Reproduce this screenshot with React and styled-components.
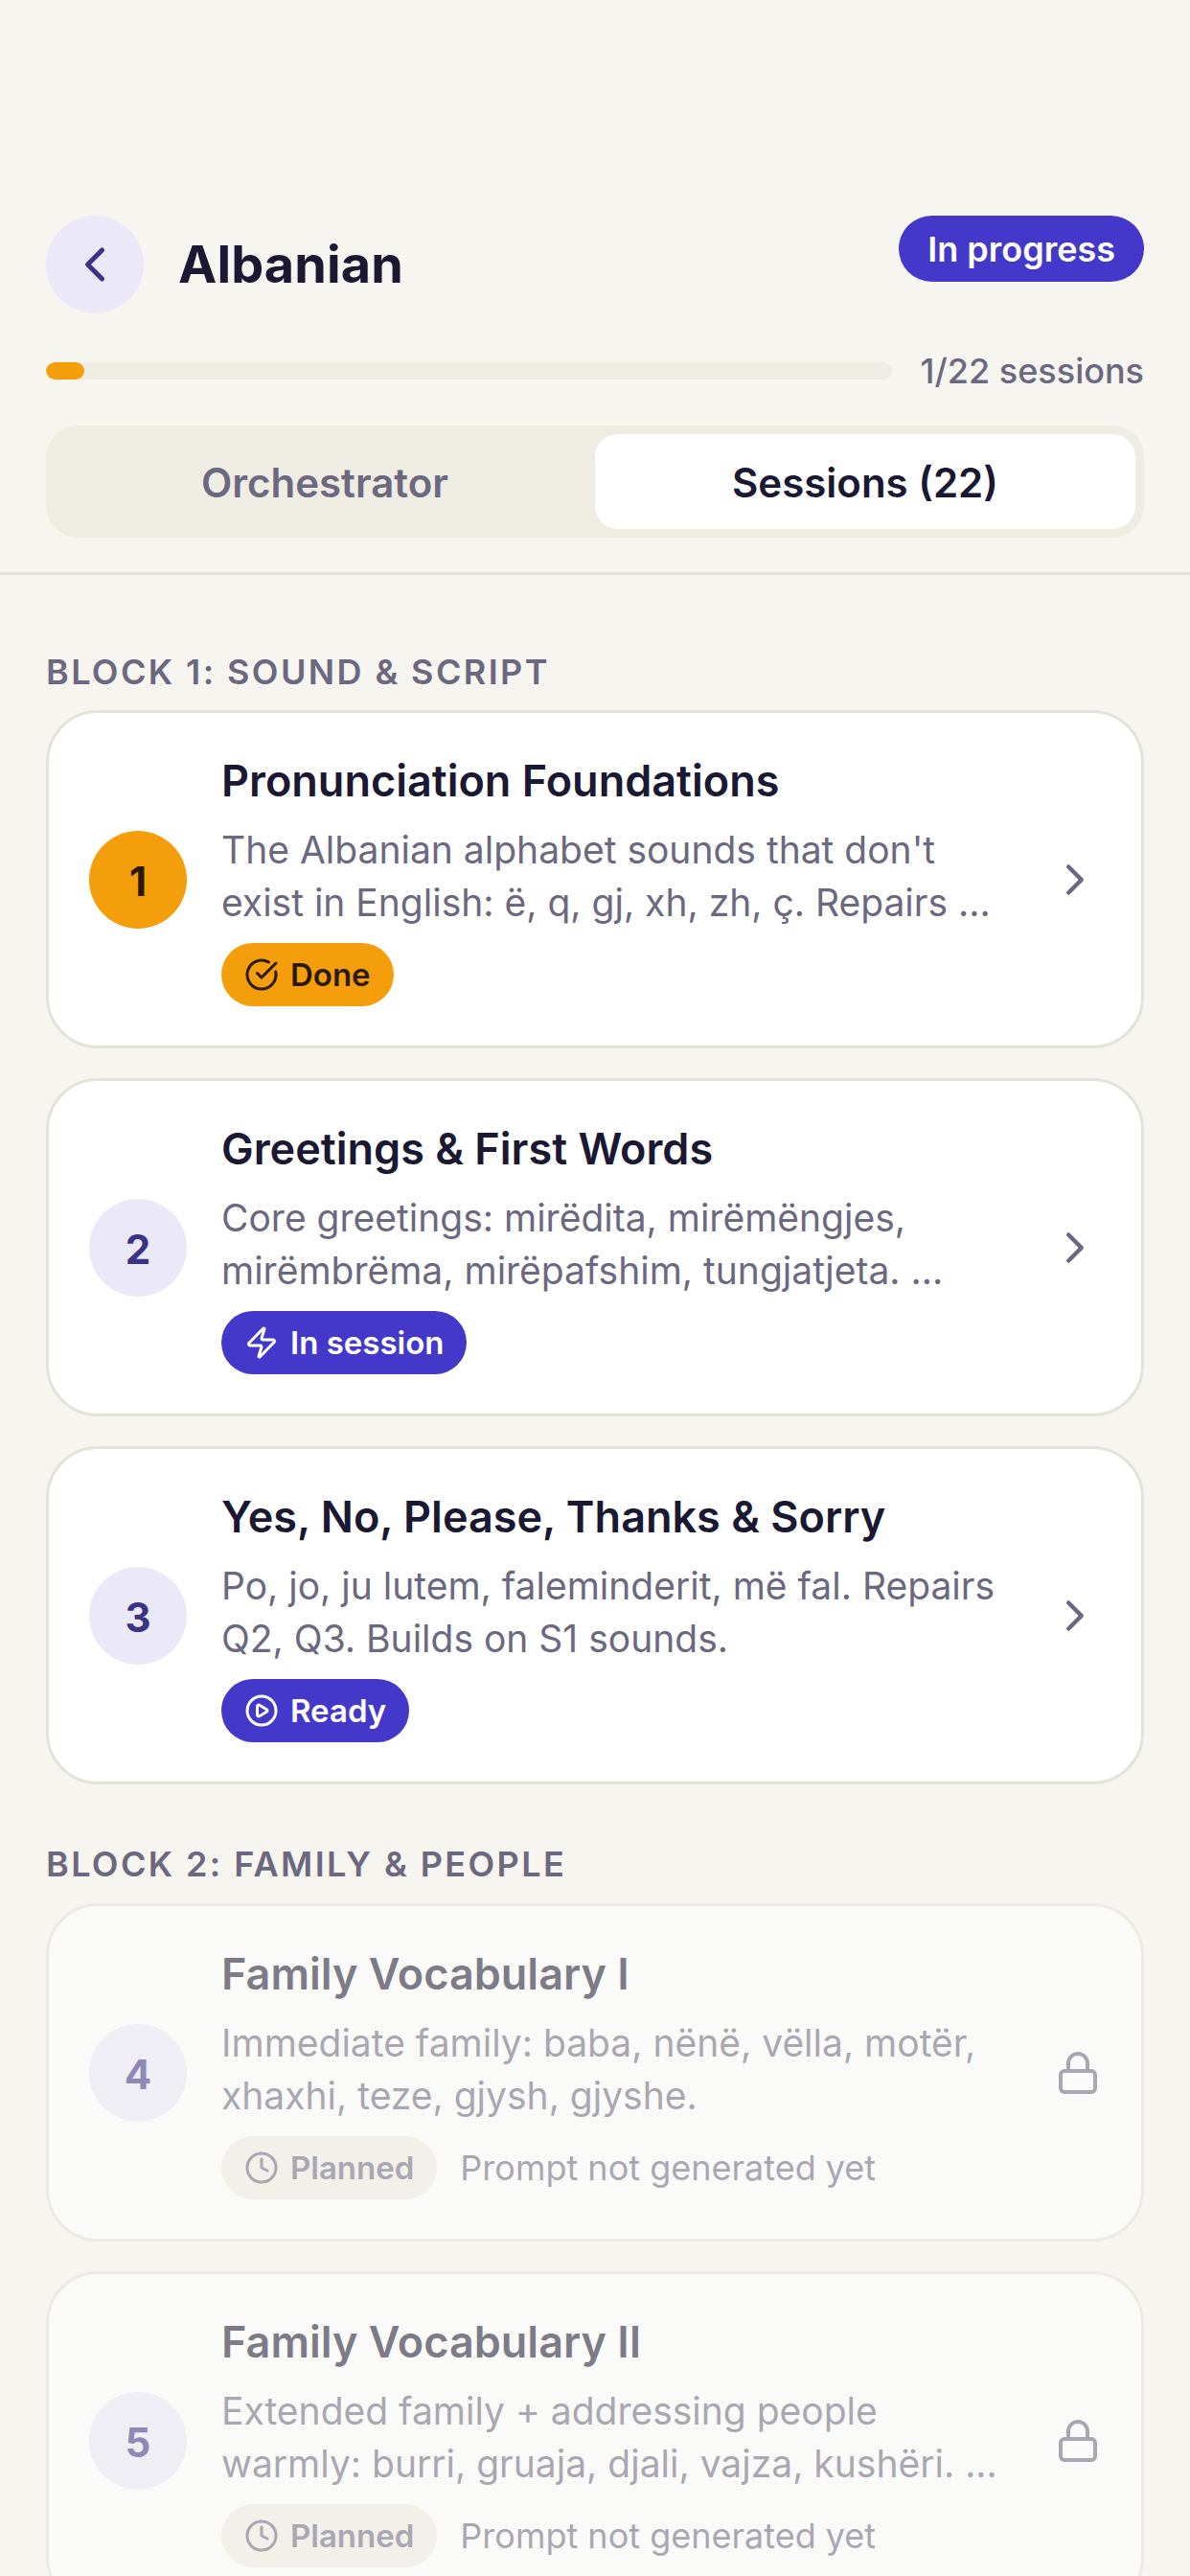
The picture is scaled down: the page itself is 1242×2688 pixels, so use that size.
import React from "react";
import styled, { createGlobalStyle } from "styled-components";
import { ChevronLeft, ChevronRight, CircleCheckBig, Zap, CirclePlay, Clock, Lock } from "lucide-react";

const Global = createGlobalStyle`
  html, body { margin: 0; padding: 0; background: #f6f5f0; }
  body { font-family: Inter, "Liberation Sans", sans-serif; -webkit-font-smoothing: antialiased; }
  * { box-sizing: border-box; }
`;

const Page = styled.div`
  width: 1242px;
  height: 2688px;
  overflow: hidden;
  background: #f6f5f0;
`;

const Header = styled.header`
  padding: 225px 48px 0;
  border-bottom: 3px solid #e5e2da;
  height: 600px;
`;

const TopRow = styled.div`
  display: flex;
  align-items: flex-start;
  justify-content: space-between;
`;

const TitleGroup = styled.div`
  display: flex;
  align-items: center;
  gap: 36px;
`;

const BackButton = styled.button`
  width: 102px;
  height: 102px;
  border: 0;
  padding: 0;
  border-radius: 50%;
  background: #ebe9f8;
  color: #3b3486;
  display: flex;
  align-items: center;
  justify-content: center;
`;

const Title = styled.h1`
  margin: 0;
  font-size: 54px;
  line-height: 1.2;
  font-weight: 700;
  letter-spacing: 0.1px;
  color: #1a1833;
`;

const StateBadge = styled.span`
  height: 69px;
  display: flex;
  align-items: center;
  padding: 0 30px;
  border-radius: 35px;
  background: #4338ca;
  color: #fff;
  font-size: 36px;
  font-weight: 600;
`;

const ProgressRow = styled.div`
  display: flex;
  align-items: center;
  gap: 30px;
  margin-top: 38px;
`;

const Track = styled.div`
  flex: 1;
  height: 18px;
  border-radius: 9px;
  background: #efece4;
  overflow: hidden;
`;

const Fill = styled.div`
  height: 100%;
  border-radius: 9px;
  background: #f59e0b;
`;

const ProgressText = styled.span`
  font-size: 36px;
  line-height: 44px;
  font-weight: 500;
  color: #6b6880;
`;

const Tabs = styled.div`
  display: grid;
  grid-template-columns: 1fr 1fr;
  height: 117px;
  margin-top: 35px;
  padding: 9px;
  border-radius: 33px;
  background: #efece4;
`;

const Tab = styled.div`
  display: flex;
  align-items: center;
  justify-content: center;
  padding-top: 2px;
  border-radius: 24px;
  font-size: 42px;
  font-weight: 600;
  background: ${(p) => (p.$active ? "#fff" : "transparent")};
  color: ${(p) => (p.$active ? "#1a1833" : "#6b6880")};
`;

const Content = styled.main`
  padding: 0 48px;
`;

const BlockLabel = styled.h2`
  margin: 0;
  padding-top: ${(p) => (p.$first ? "81px" : "63px")};
  height: ${(p) => (p.$first ? "141px" : "124px")};
  font-size: 36px;
  line-height: 40px;
  font-weight: 600;
  letter-spacing: 2.4px;
  color: #6b6880;
  text-transform: uppercase;
`;

const Cards = styled.div`
  display: flex;
  flex-direction: column;
  gap: 31px;
`;

const Card = styled.article`
  height: 353px;
  display: flex;
  align-items: center;
  gap: 36px;
  padding: 0 42px;
  border: 3px solid #e5e2da;
  border-radius: 54px;
  background: #fff;
  opacity: ${(p) => (p.$locked ? 0.55 : 1)};
`;

const Num = styled.div`
  flex: none;
  width: 102px;
  height: 102px;
  padding-top: 3px;
  border-radius: 50%;
  display: flex;
  align-items: center;
  justify-content: center;
  font-size: 42px;
  font-weight: 700;
  background: ${(p) => (p.$done ? "#f59e0b" : "#ebe9f8")};
  color: ${(p) => (p.$done ? "#2c1a00" : "#3b3486")};
`;

const Body = styled.div`
  flex: 1;
  min-width: 0;
  padding-top: 3px;
`;

const CardTitle = styled.h3`
  margin: 0;
  font-size: 45px;
  line-height: 54px;
  font-weight: 600;
  color: #1a1833;
`;

const Desc = styled.p`
  margin: 18px 0 0;
  font-size: 39px;
  line-height: 54.6px;
  color: #6b6880;
`;

const MetaRow = styled.div`
  display: flex;
  align-items: center;
  gap: 24px;
  margin-top: 15px;
`;

const Pill = styled.span`
  height: 66px;
  display: inline-flex;
  align-items: center;
  gap: 12px;
  padding: 0 24px;
  border-radius: 33px;
  font-size: 33px;
  font-weight: 600;
  background: ${(p) => ({ done: "#f59e0b", active: "#4338ca", planned: "#efece4" }[p.$kind])};
  color: ${(p) => ({ done: "#2c1a00", active: "#fff", planned: "#6b6880" }[p.$kind])};
`;

const Note = styled.span`
  font-size: 36px;
  color: #6b6880;
`;

const Trail = styled.div`
  flex: none;
  width: 54px;
  display: flex;
  justify-content: flex-end;
  color: #6b6880;
`;

const pillIcon = { size: 36, strokeWidth: 2 };

const STATUS = {
  done: { kind: "done", label: "Done", icon: <CircleCheckBig {...pillIcon} /> },
  session: { kind: "active", label: "In session", icon: <Zap {...pillIcon} /> },
  ready: { kind: "active", label: "Ready", icon: <CirclePlay {...pillIcon} /> },
  planned: { kind: "planned", label: "Planned", icon: <Clock {...pillIcon} /> },
};

const SessionCard = ({ n, title, desc, status }) => {
  const s = STATUS[status];
  const locked = status === "planned";
  return (
    <Card $locked={locked}>
      <Num $done={status === "done"}>{n}</Num>
      <Body>
        <CardTitle>{title}</CardTitle>
        <Desc>{desc}</Desc>
        <MetaRow>
          <Pill $kind={s.kind}>
            {s.icon}
            {s.label}
          </Pill>
          {locked && <Note>Prompt not generated yet</Note>}
        </MetaRow>
      </Body>
      <Trail>{locked ? <Lock size={48} strokeWidth={2} /> : <ChevronRight size={54} strokeWidth={2} />}</Trail>
    </Card>
  );
};

export default function App() {
  return (
    <Page>
      <Global />
      <Header>
        <TopRow>
          <TitleGroup>
            <BackButton aria-label="Back">
              <ChevronLeft size={60} strokeWidth={2} />
            </BackButton>
            <Title>Albanian</Title>
          </TitleGroup>
          <StateBadge>In progress</StateBadge>
        </TopRow>
        <ProgressRow>
          <Track>
            <Fill style={{ width: `${(1 / 22) * 100}%` }} />
          </Track>
          <ProgressText>1/22 sessions</ProgressText>
        </ProgressRow>
        <Tabs>
          <Tab>Orchestrator</Tab>
          <Tab $active>Sessions (22)</Tab>
        </Tabs>
      </Header>
      <Content>
        <BlockLabel $first>Block 1: Sound &amp; Script</BlockLabel>
        <Cards>
          <SessionCard n={1} status="done" title="Pronunciation Foundations" desc="The Albanian alphabet sounds that don't exist in English: ë, q, gj, xh, zh, ç. Repairs ..." />
          <SessionCard n={2} status="session" title="Greetings & First Words" desc="Core greetings: mirëdita, mirëmëngjes, mirëmbrëma, mirëpafshim, tungjatjeta. ..." />
          <SessionCard n={3} status="ready" title="Yes, No, Please, Thanks & Sorry" desc="Po, jo, ju lutem, faleminderit, më fal. Repairs Q2, Q3. Builds on S1 sounds." />
        </Cards>
        <BlockLabel>Block 2: Family &amp; People</BlockLabel>
        <Cards>
          <SessionCard n={4} status="planned" title="Family Vocabulary I" desc="Immediate family: baba, nënë, vëlla, motër, xhaxhi, teze, gjysh, gjyshe." />
          <SessionCard n={5} status="planned" title="Family Vocabulary II" desc="Extended family + addressing people warmly: burri, gruaja, djali, vajza, kushëri. ..." />
        </Cards>
      </Content>
    </Page>
  );
}
